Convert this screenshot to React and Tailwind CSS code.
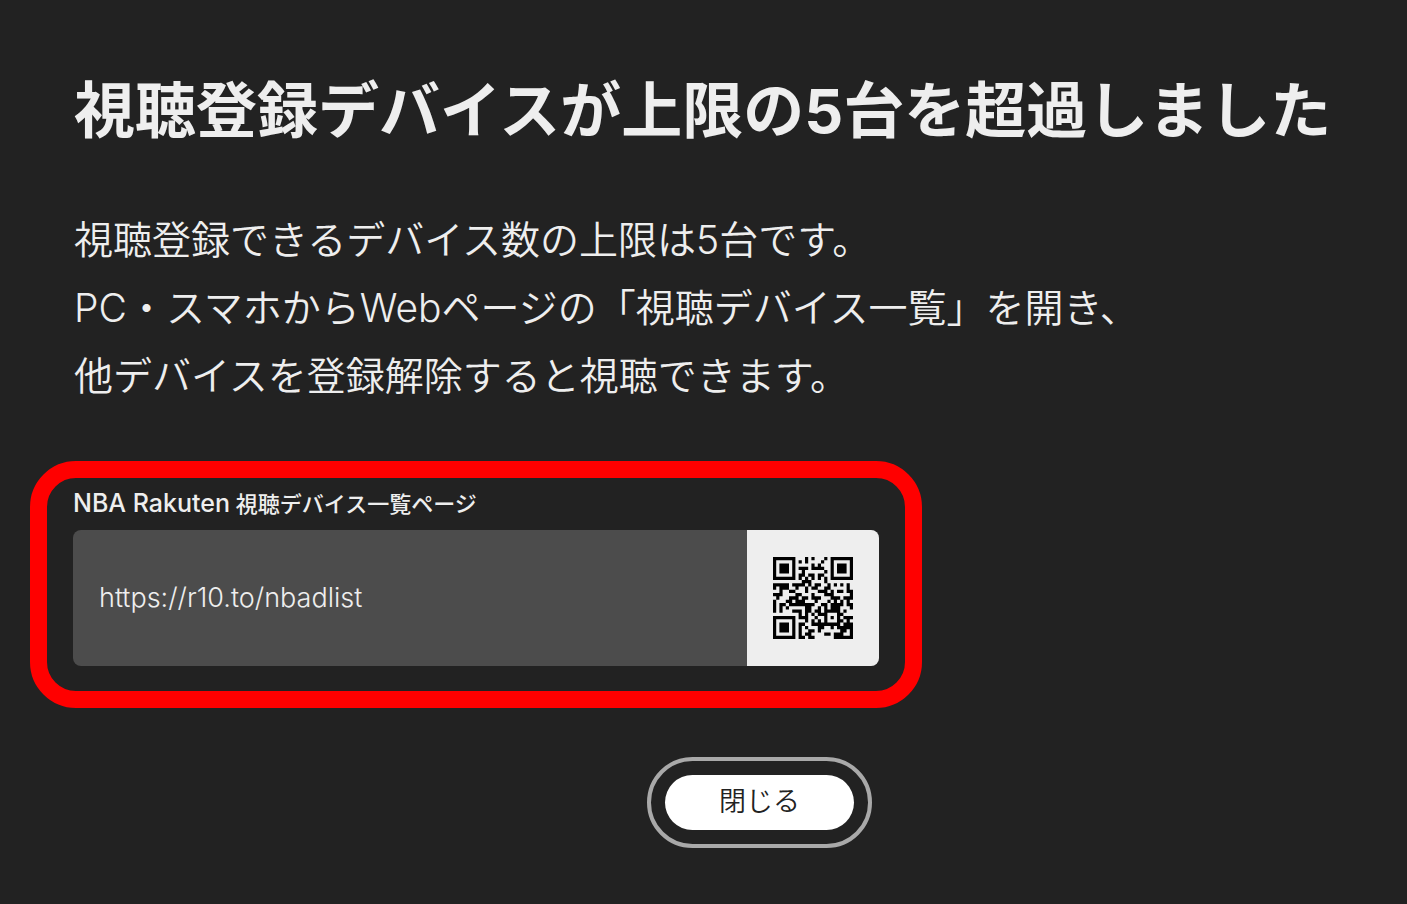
import React from 'react';

const PAGE_URL = 'https://r10.to/nbadlist';
const QR_SIZE = 25;

// GF(256) multiplication used by the Reed-Solomon code
const gfMultiply = (a, b) => {
  let result = 0;
  for (let i = 7; i >= 0; i--) {
    result = (result << 1) ^ ((result >> 7) * 0x11d);
    result ^= ((b >> i) & 1) * a;
  }
  return result;
};

const errorCorrection = (data, count) => {
  const generator = new Array(count).fill(0);
  generator[count - 1] = 1;
  let root = 1;
  for (let i = 0; i < count; i++) {
    for (let j = 0; j < count; j++) {
      generator[j] = gfMultiply(generator[j], root);
      if (j + 1 < count) generator[j] ^= generator[j + 1];
    }
    root = gfMultiply(root, 2);
  }

  const remainder = new Array(count).fill(0);
  data.forEach((byte) => {
    const factor = byte ^ remainder.shift();
    remainder.push(0);
    generator.forEach((g, i) => {
      remainder[i] ^= gfMultiply(g, factor);
    });
  });
  return remainder;
};

// Version 2, level L, byte mode: 34 data codewords and 10 for correction
const getCodewords = (text) => {
  let bits = '0100' + text.length.toString(2).padStart(8, '0');
  for (const char of text) {
    bits += char.charCodeAt(0).toString(2).padStart(8, '0');
  }
  bits += '0000';
  const data = bits.match(/.{8}/g).map((byte) => parseInt(byte, 2));
  for (let pad = 0xec; data.length < 34; pad ^= 0xec ^ 0x11) {
    data.push(pad);
  }
  return [...data, ...errorCorrection(data, 10)];
};

const buildQr = (text) => {
  const grid = Array.from({ length: QR_SIZE }, () => new Array(QR_SIZE).fill(null));
  const set = (row, col, dark) => {
    if (row >= 0 && col >= 0 && row < QR_SIZE && col < QR_SIZE) grid[row][col] = dark;
  };

  for (let i = 0; i < QR_SIZE; i++) {
    set(6, i, i % 2 === 0);
    set(i, 6, i % 2 === 0);
  }

  // Finder and alignment patterns
  [[3, 3], [3, 21], [21, 3]].forEach(([row, col]) => {
    for (let y = -4; y <= 4; y++) {
      for (let x = -4; x <= 4; x++) {
        const ring = Math.max(Math.abs(x), Math.abs(y));
        set(row + y, col + x, ring !== 2 && ring !== 4);
      }
    }
  });
  for (let y = -2; y <= 2; y++) {
    for (let x = -2; x <= 2; x++) {
      set(18 + y, 18 + x, Math.max(Math.abs(x), Math.abs(y)) !== 1);
    }
  }

  // Format bits for level L with mask 2
  const format = 0b111110110101010;
  const bit = (i) => ((format >> i) & 1) === 1;
  for (let i = 0; i <= 5; i++) set(i, 8, bit(i));
  set(7, 8, bit(6));
  set(8, 8, bit(7));
  set(8, 7, bit(8));
  for (let i = 9; i < 15; i++) set(8, 14 - i, bit(i));
  for (let i = 0; i < 8; i++) set(8, QR_SIZE - 1 - i, bit(i));
  for (let i = 8; i < 15; i++) set(QR_SIZE - 15 + i, 8, bit(i));
  set(QR_SIZE - 8, 8, true);

  const codewords = getCodewords(text);
  let index = 0;
  for (let right = QR_SIZE - 1; right >= 1; right -= 2) {
    if (right === 6) right = 5;
    for (let step = 0; step < QR_SIZE; step++) {
      for (let j = 0; j < 2; j++) {
        const col = right - j;
        const upward = ((right + 1) & 2) === 0;
        const row = upward ? QR_SIZE - 1 - step : step;
        if (grid[row][col] !== null) continue;
        const value = ((codewords[index >> 3] ?? 0) >> (7 - (index & 7))) & 1;
        grid[row][col] = (value === 1) !== (col % 3 === 0);
        index++;
      }
    }
  }
  return grid;
};

const QrCode = ({ value }) => {
  const path = buildQr(value)
    .flatMap((row, y) => row.map((dark, x) => (dark ? `M${x} ${y}h1v1h-1z` : '')))
    .join('');

  return (
    <svg
      viewBox={`0 0 ${QR_SIZE} ${QR_SIZE}`}
      preserveAspectRatio="none"
      className="h-[82px] w-20"
      role="img"
      aria-label={value}
    >
      <path d={path} fill="#000" />
    </svg>
  );
};

const App = () => {
  return (
    <main
      lang="ja"
      className="min-h-screen bg-[#222222] px-[30px] pt-[67px] pb-14 font-['Inter','Noto_Sans_CJK_JP',sans-serif] text-[#eeeeee]"
    >
      <div className="pl-11">
        <h1 className="text-[61px] leading-[88px] font-bold whitespace-nowrap">
          視聴登録デバイスが上限の5台を超過しました
        </h1>
        <p className="mt-[51px] text-[39px] leading-[68px] font-[350]">
          視聴登録できるデバイス数の上限は5台です。
          <br />
          PC・スマホからWebページの「視聴デバイス一覧」を開き、
          <br />
          他デバイスを登録解除すると視聴できます。
        </p>
      </div>

      {/* Device list page */}
      <section className="mt-[51px] max-w-[892px] rounded-[46px] border-[17px] border-[#ff0000] px-[26px] pt-[7px] pb-[25px]">
        <h2 className="text-[22px] leading-9 font-medium">
          <span className="text-[25px] leading-9">NBA Rakuten</span> 視聴デバイス一覧ページ
        </h2>
        <div className="mt-2 flex h-[136px] overflow-hidden rounded-lg bg-[#4c4c4c]">
          <div className="flex flex-1 items-center pl-[26px]">
            <a href={PAGE_URL} className="text-[27px] font-light">
              {PAGE_URL}
            </a>
          </div>
          <div className="flex w-[132px] items-center justify-center bg-[#eeeeee]">
            <QrCode value={PAGE_URL} />
          </div>
        </div>
      </section>

      <div className="mt-[49px] flex max-w-[892px] justify-end pr-[50px]">
        <div className="rounded-full border-4 border-[#a9a9a9] p-3.5">
          <button
            type="button"
            className="h-[55px] w-[189px] rounded-full bg-white text-[27px] font-[350] text-[#222222]"
          >
            閉じる
          </button>
        </div>
      </div>
    </main>
  );
};

export default App;
